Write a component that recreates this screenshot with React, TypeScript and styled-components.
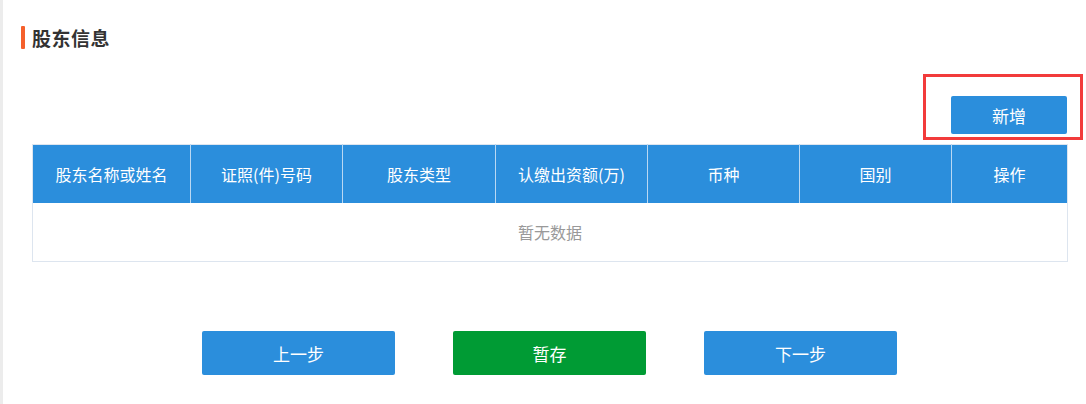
import React from "react";
import styled, { createGlobalStyle } from "styled-components";

const GlobalStyle = createGlobalStyle`
  html, body {
    margin: 0;
    padding: 0;
    background: #fff;
  }
  body {
    font-family: "Noto Sans CJK SC", "Noto Sans", sans-serif;
  }
`;

const BLUE = "#2b8edc";

const Page = styled.div`
  box-sizing: border-box;
  width: 1086px;
  height: 404px;
  border-left: 3px solid #ececec;
  padding: 26px 19px 0 18px;
  display: flex;
  flex-direction: column;
`;

const Title = styled.h3`
  margin: 0;
  height: 23px;
  display: flex;
  align-items: center;
  gap: 7px;
  font-size: 19px;
  font-weight: bold;
  color: #333;
  letter-spacing: 0.5px;

  &::before {
    content: "";
    width: 4px;
    height: 23px;
    border-radius: 1px;
    background: #f5602c;
  }
`;

const Content = styled.div`
  padding-left: 11px;
  display: flex;
  flex-direction: column;
`;

const Toolbar = styled.div`
  display: flex;
  justify-content: flex-end;
  margin-top: 47px;
  margin-bottom: 10px;
`;

const Highlight = styled.div`
  position: relative;

  &::after {
    content: "";
    position: absolute;
    left: -28px;
    top: -22px;
    right: -16px;
    bottom: -6px;
    border: 3px solid #f23b3b;
    pointer-events: none;
  }
`;

const Button = styled.button<{ $tone?: "blue" | "green"; $w: number; $h: number }>`
  width: ${(p) => p.$w}px;
  height: ${(p) => p.$h}px;
  border: none;
  border-radius: 2px;
  background: ${(p) => (p.$tone === "green" ? "#009b34" : BLUE)};
  color: #fff;
  font-family: "Noto Sans CJK SC", sans-serif;
  font-size: 17px;
  cursor: pointer;
  padding: 0;
`;

const Table = styled.table`
  width: 1035px;
  border-collapse: collapse;
  table-layout: fixed;
  border: 1px solid #dde5ef;
`;

const Th = styled.th`
  height: 58px;
  background: ${BLUE};
  color: #fff;
  font-size: 16px;
  font-weight: normal;
  text-align: center;
  padding: 0;
  border-right: 1px solid #b9d8f3;

  &:last-child {
    border-right: none;
  }
`;

const EmptyCell = styled.td`
  height: 58px;
  text-align: center;
  color: #999;
  font-size: 16px;
  padding: 0;
  background: #fff;
`;

const Footer = styled.div`
  display: flex;
  justify-content: center;
  gap: 58px;
  margin-top: 69px;
`;

const columns: [string, number][] = [
  ["股东名称或姓名", 158],
  ["证照(件)号码", 152],
  ["股东类型", 153],
  ["认缴出资额(万)", 152],
  ["币种", 152],
  ["国别", 152],
  ["操作", 116],
];

export default function App() {
  return (
    <>
      <GlobalStyle />
      <Page>
        <Title>股东信息</Title>
        <Content>
          <Toolbar>
            <Highlight>
              <Button $w={116} $h={38}>新增</Button>
            </Highlight>
          </Toolbar>
          <Table>
            <colgroup>
              {columns.map(([name, w]) => (
                <col key={name} style={{ width: w }} />
              ))}
            </colgroup>
            <thead>
              <tr>
                {columns.map(([name]) => (
                  <Th key={name}>{name}</Th>
                ))}
              </tr>
            </thead>
            <tbody>
              <tr>
                <EmptyCell colSpan={columns.length}>暂无数据</EmptyCell>
              </tr>
            </tbody>
          </Table>
          <Footer>
            <Button $w={193} $h={44}>上一步</Button>
            <Button $w={193} $h={44} $tone="green">暂存</Button>
            <Button $w={193} $h={44}>下一步</Button>
          </Footer>
        </Content>
      </Page>
    </>
  );
}
